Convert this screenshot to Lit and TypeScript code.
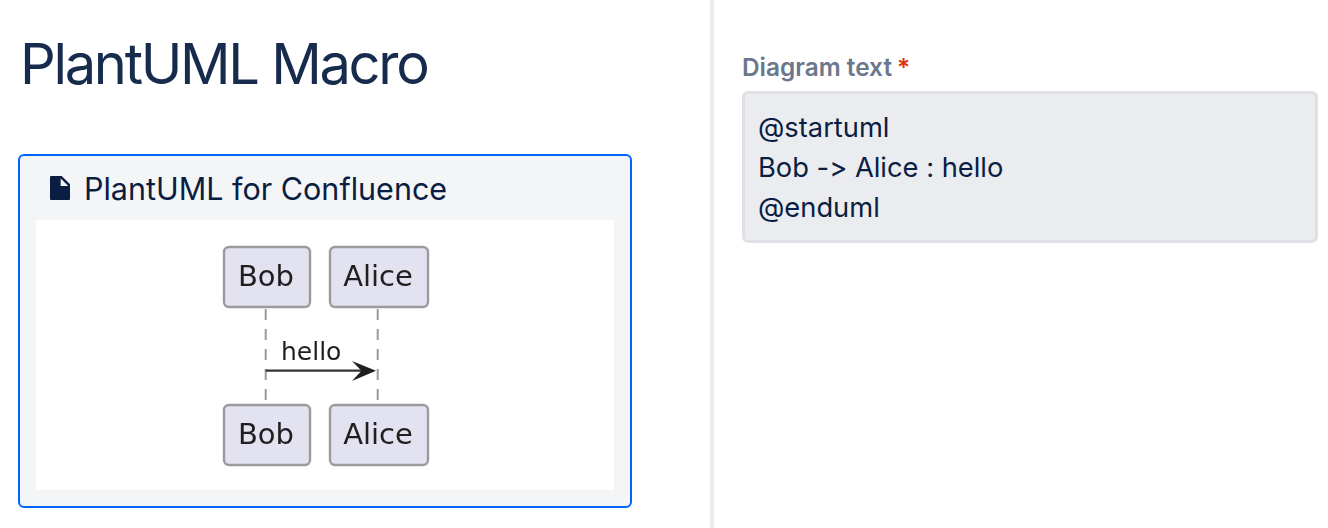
import { LitElement, html, css } from "lit";
import { customElement } from "lit/decorators.js";

@customElement("app-root")
export class AppRoot extends LitElement {
  static styles = css`
    :host {
      display: grid;
      grid-template-columns: 710px 4px 1fr;
      width: 1328px;
      height: 528px;
      overflow: hidden;
      background: #fff;
      font-family: Inter, "Liberation Sans", sans-serif;
      font-feature-settings: "calt" 0, "liga" 0;
      color: #172b4d;
    }
    .left {
      padding: 0 78px 0 18px;
      display: flex;
      flex-direction: column;
      min-width: 0;
    }
    h1 {
      margin: 30px 0 0 2px;
      font-size: 56px;
      line-height: 68px;
      font-weight: 400;
      letter-spacing: -2.3px;
      color: #172b4d;
    }
    .card {
      margin-top: 56px;
      box-sizing: border-box;
      height: 354px;
      border: 2px solid #0065ff;
      border-radius: 6px;
      background: #f4f5f7;
      padding: 0 16px 16px;
      display: flex;
      flex-direction: column;
    }
    .card-title {
      height: 64px;
      display: flex;
      align-items: center;
      gap: 13px;
      padding-left: 13px;
      font-size: 30.5px;
      color: #091e42;
      white-space: nowrap;
    }
    .card-title svg { display: block; flex: none; }
    .canvas {
      flex: 1;
      background: #fff;
      display: flex;
      align-items: center;
      justify-content: center;
      padding: 2px 0 0 2px;
    }
    .diagram { display: block; filter: blur(0.55px); }
    .diagram text {
      font-family: "DejaVu Sans", sans-serif;
      fill: #1f1f1f;
    }
    .name { font-size: 29px; }
    .msg { font-size: 25px; }
    .divider { background: #ebecf0; }
    .right {
      padding: 52px 10px 0 28px;
      display: flex;
      flex-direction: column;
      min-width: 0;
    }
    .label {
      display: flex;
      gap: 5px;
      font-size: 24.4px;
      line-height: 30px;
      font-weight: 600;
      color: #6b778c;
      height: 39px;
    }
    .req { color: #de350b; }
    .field {
      box-sizing: border-box;
      height: 152px;
      border: 3px solid #dfe1e6;
      border-radius: 6px;
      background: #ebecf0;
      padding: 14px 13px;
      font-size: 27.3px;
      line-height: 40px;
      color: #091e42;
    }
  `;

  private box(x: number, y: number, w: number, label: string) {
    return html`<svg x="0" y="0" overflow="visible">
      <rect x=${x} y=${y} width=${w} height="60" rx="5" fill="#e2e2f0" stroke="#9b9b9f" stroke-width="2.4"></rect>
      <text class="name" x=${x + w / 2 - 1} y=${y + 39} text-anchor="middle">${label}</text>
    </svg>`;
  }

  render() {
    return html`
      <section class="left">
        <h1>PlantUML Macro</h1>
        <div class="card">
          <div class="card-title">
            <svg width="22" height="24" viewBox="0 0 22 24" aria-hidden="true">
              <path d="M2 0h10.7L21 8.3V23a1 1 0 0 1-1 1H2a1 1 0 0 1-1-1V1a1 1 0 0 1 1-1z" fill="#091e42"></path>
              <path d="M11.7 2.4V10h7.6z" fill="#f4f5f7"></path>
            </svg>
            <span>PlantUML for Confluence</span>
          </div>
          <div class="canvas">
            <svg class="diagram" width="210" height="224" viewBox="221 244 210 224">
              <g fill="none" stroke="#9a9a9a" stroke-width="2" stroke-dasharray="11 9">
                <line x1="265.7" y1="309" x2="265.7" y2="403"></line>
                <line x1="377.7" y1="309" x2="377.7" y2="403"></line>
              </g>
              ${this.box(224, 247, 86, "Bob")}
              ${this.box(330, 247, 98, "Alice")}
              ${this.box(224, 405, 86, "Bob")}
              ${this.box(330, 405, 98, "Alice")}
              <text class="msg" x="281" y="360">hello</text>
              <line x1="265.7" y1="370.7" x2="366" y2="370.7" stroke="#333" stroke-width="2.2"></line>
              <path d="M352 361 L376 370.7 L352 381 L361.5 370.7 Z" fill="#1f1f1f"></path>
            </svg>
          </div>
        </div>
      </section>
      <div class="divider"></div>
      <section class="right">
        <div class="label"><span>Diagram text</span><span class="req">*</span></div>
        <div class="field">@startuml<br />Bob -&gt; Alice : hello<br />@enduml</div>
      </section>
    `;
  }
}
